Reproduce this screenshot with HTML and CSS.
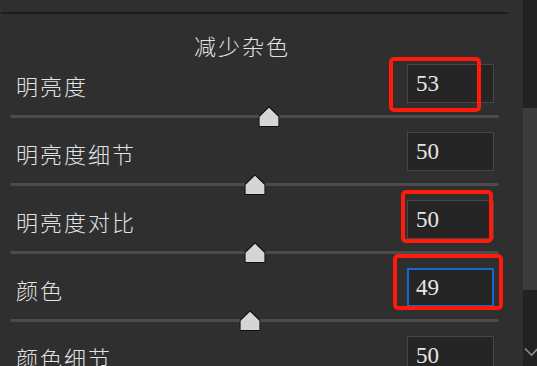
FILE: index.html
```html
<!DOCTYPE html>
<html lang="zh">
<head>
<meta charset="utf-8">
<link rel="stylesheet" href="styles.css">
</head>
<body>
<div class="app">
  <div class="panel">
    <div class="divider"></div>
    <div class="title">减少杂色</div>

    <div class="row">
      <div class="row-head">
        <span class="label">明亮度</span>
        <div class="value-box">53</div>
      </div>
      <div class="slider">
        <div class="track"></div>
        <svg class="thumb" style="left:53%" viewBox="0 0 21 21" width="21" height="21"><polygon points="10.5,0.8 20.5,10.5 20.5,20.5 0.5,20.5 0.5,10.5" /></svg>
      </div>
    </div>

    <div class="row">
      <div class="row-head">
        <span class="label">明亮度细节</span>
        <div class="value-box">50</div>
      </div>
      <div class="slider">
        <div class="track"></div>
        <svg class="thumb" style="left:50%" viewBox="0 0 21 21" width="21" height="21"><polygon points="10.5,0.8 20.5,10.5 20.5,20.5 0.5,20.5 0.5,10.5" /></svg>
      </div>
    </div>

    <div class="row">
      <div class="row-head">
        <span class="label">明亮度对比</span>
        <div class="value-box">50</div>
      </div>
      <div class="slider">
        <div class="track"></div>
        <svg class="thumb" style="left:50%" viewBox="0 0 21 21" width="21" height="21"><polygon points="10.5,0.8 20.5,10.5 20.5,20.5 0.5,20.5 0.5,10.5" /></svg>
      </div>
    </div>

    <div class="row">
      <div class="row-head">
        <span class="label">颜色</span>
        <div class="value-box focused">49</div>
      </div>
      <div class="slider">
        <div class="track"></div>
        <svg class="thumb" style="left:49%" viewBox="0 0 21 21" width="21" height="21"><polygon points="10.5,0.8 20.5,10.5 20.5,20.5 0.5,20.5 0.5,10.5" /></svg>
      </div>
    </div>

    <div class="row">
      <div class="row-head">
        <span class="label">颜色细节</span>
        <div class="value-box">50</div>
      </div>
    </div>
  </div>

  <div class="scrollbar">
    <div class="sb-top"></div>
    <div class="sb-thumb"></div>
    <div class="sb-bottom">
      <svg class="chevron" viewBox="0 0 14 10" width="14" height="10"><polyline points="2,1.5 8.5,8 15,1.5" /></svg>
    </div>
  </div>

  <div class="mark mark-1"></div>
  <div class="mark mark-2"></div>
  <div class="mark mark-3"></div>
</div>
</body>
</html>
```

FILE: styles.css
```css
html, body {
  margin: 0;
  padding: 0;
  background: #2f2f2f;
}

.app {
  position: relative;
  display: flex;
  width: 537px;
  height: 366px;
  overflow: hidden;
  font-family: "Noto Sans CJK SC", "Noto Sans", sans-serif;
  font-weight: 300;
  color: #e2e2e2;
}

.panel {
  flex: 1;
  min-width: 0;
  overflow: hidden;
}

.divider {
  margin: 12px 15px 0 1px;
  height: 2px;
  background: #1d1d1d;
}

.title {
  padding: 16px 0 0 194px;
  height: 30px;
  line-height: 30px;
  margin-bottom: 4px;
  font-size: 22px;
  letter-spacing: 2px;
}

.row {
  height: 68px;
}

.row-head {
  display: flex;
  align-items: center;
  justify-content: space-between;
  height: 39px;
  padding: 0 29px 0 16px;
}

.label {
  font-size: 22px;
  line-height: 30px;
  letter-spacing: 2px;
  position: relative;
  top: 1px;
}

.value-box {
  box-sizing: border-box;
  width: 87px;
  height: 39px;
  border: 1px solid #474747;
  background: #252525;
  padding-left: 8px;
  font-family: "Liberation Serif", "DejaVu Serif", serif;
  font-weight: 400;
  font-size: 23px;
  line-height: 37px;
  color: #e6e6e6;
}

.value-box.focused {
  border: 2px solid #1767cf;
  padding-left: 7px;
  line-height: 35px;
}

.slider {
  position: relative;
  height: 29px;
  margin: 0 24px 0 10px;
}

.track {
  position: absolute;
  top: 12px;
  left: 0;
  right: 0;
  height: 3px;
  border-radius: 2px;
  background: #4b4b4b;
}

.thumb {
  position: absolute;
  top: 3px;
  transform: translateX(-50%);
}

.thumb polygon {
  fill: #d5d5d5;
  stroke: #121212;
  stroke-width: 1.2;
  stroke-linejoin: miter;
}

.scrollbar {
  width: 14px;
  display: flex;
  flex-direction: column;
  background: #222222;
}

.sb-top {
  height: 108px;
}

.sb-thumb {
  height: 182px;
  background: #3b3b3b;
}

.sb-bottom {
  flex: 1;
  padding-top: 57px;
}

.chevron {
  display: block;
}

.chevron polyline {
  fill: none;
  stroke: #8f8f8f;
  stroke-width: 1.6;
}

.mark {
  position: absolute;
  box-sizing: border-box;
  border: 4px solid #ff1a0a;
  border-radius: 5px;
}

.mark-1 {
  left: 389px;
  top: 57px;
  width: 92px;
  height: 55px;
}

.mark-2 {
  left: 401px;
  top: 190px;
  width: 92px;
  height: 53px;
}

.mark-3 {
  left: 393px;
  top: 254px;
  width: 110px;
  height: 56px;
}
```
